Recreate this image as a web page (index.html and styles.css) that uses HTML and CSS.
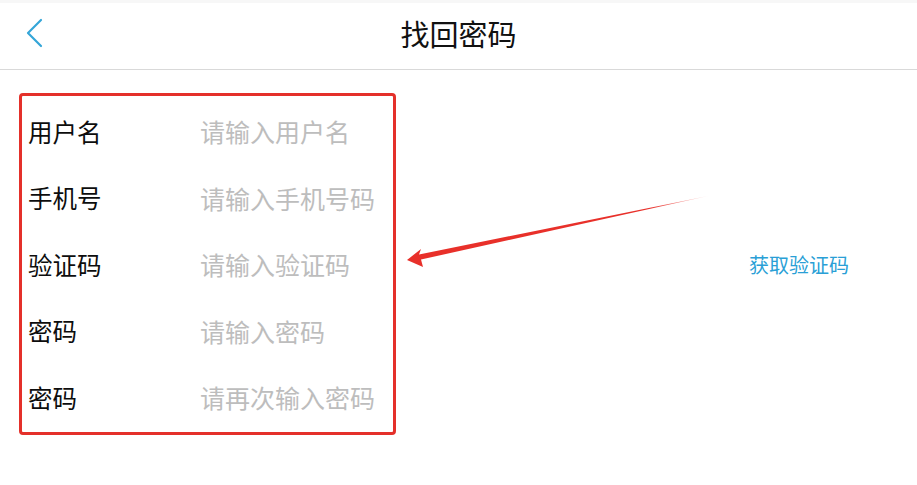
FILE: index.html
```html
<!DOCTYPE html>
<html lang="zh">
<head>
<meta charset="utf-8">
<title>找回密码</title>
<link rel="stylesheet" href="styles.css">
</head>
<body>
<div class="page">
  <header class="topbar">
    <div class="back">
      <svg width="20" height="30" viewBox="0 0 20 30"><polyline points="16,2 3,15 16,28" fill="none" stroke="#35a6d8" stroke-width="2.2" stroke-linecap="round" stroke-linejoin="round"/></svg>
    </div>
    <h1 class="title">找回密码</h1>
    <div class="spacer"></div>
  </header>
  <main class="form">
    <div class="row"><span class="label">用户名</span><span class="ph">请输入用户名</span></div>
    <div class="row"><span class="label">手机号</span><span class="ph">请输入手机号码</span></div>
    <div class="row"><span class="label">验证码</span><span class="ph">请输入验证码</span><span class="code">获取验证码</span></div>
    <div class="row"><span class="label">密码</span><span class="ph">请输入密码</span></div>
    <div class="row"><span class="label">密码</span><span class="ph">请再次输入密码</span></div>
  </main>
  <div class="mark-box"></div>
  <svg class="mark-arrow" width="917" height="485" viewBox="0 0 917 485">
    <defs>
      <linearGradient id="fade" x1="407" y1="0" x2="710" y2="0" gradientUnits="userSpaceOnUse">
        <stop offset="0" stop-color="#e8302a"/>
        <stop offset="0.8" stop-color="#e8302a"/>
        <stop offset="1" stop-color="#e8302a" stop-opacity="0.2"/>
      </linearGradient>
    </defs>
    <polygon points="407,260 421,249 419,254.5 708,196 421,259.5 423,267" fill="url(#fade)"/>
  </svg>
</div>
</body>
</html>
```

FILE: styles.css
```css
* { box-sizing: border-box; }
html, body {
  margin: 0;
  padding: 0;
  background: #ffffff;
  font-family: "Noto Sans CJK SC", "Noto Sans", sans-serif;
}
.page {
  position: relative;
  width: 917px;
  height: 485px;
  overflow: hidden;
}
.topbar {
  display: flex;
  align-items: center;
  height: 70px;
  border-top: 3px solid #f7f7f7;
  border-bottom: 1px solid #d9d9d9;
  padding: 0 0 6px 25px;
}
.back {
  width: 60px;
  display: flex;
  align-items: center;
}
.back svg { display: block; }
.title {
  flex: 1;
  margin: 0 85px 0 0;
  text-align: center;
  font-size: 29px;
  font-weight: 400;
  color: #111;
  line-height: 1;
}
.spacer { width: 0; }
.form {
  display: flex;
  flex-direction: column;
  padding: 28px 68px 0 28px;
}
.row {
  display: flex;
  align-items: center;
  height: 66.5px;
  font-size: 24.5px;
}
.label {
  width: 172px;
  color: #0d0d0d;
}
.ph {
  flex: 1;
  font-size: 25px;
  color: #bdbdbd;
}
.code {
  font-size: 20px;
  color: #2a9fd6;
}
.mark-box {
  position: absolute;
  left: 19px;
  top: 93px;
  width: 377px;
  height: 342px;
  border: 3px solid #e4302a;
  border-radius: 4px;
  pointer-events: none;
}
.mark-arrow {
  position: absolute;
  left: 0;
  top: 0;
  pointer-events: none;
}
```
